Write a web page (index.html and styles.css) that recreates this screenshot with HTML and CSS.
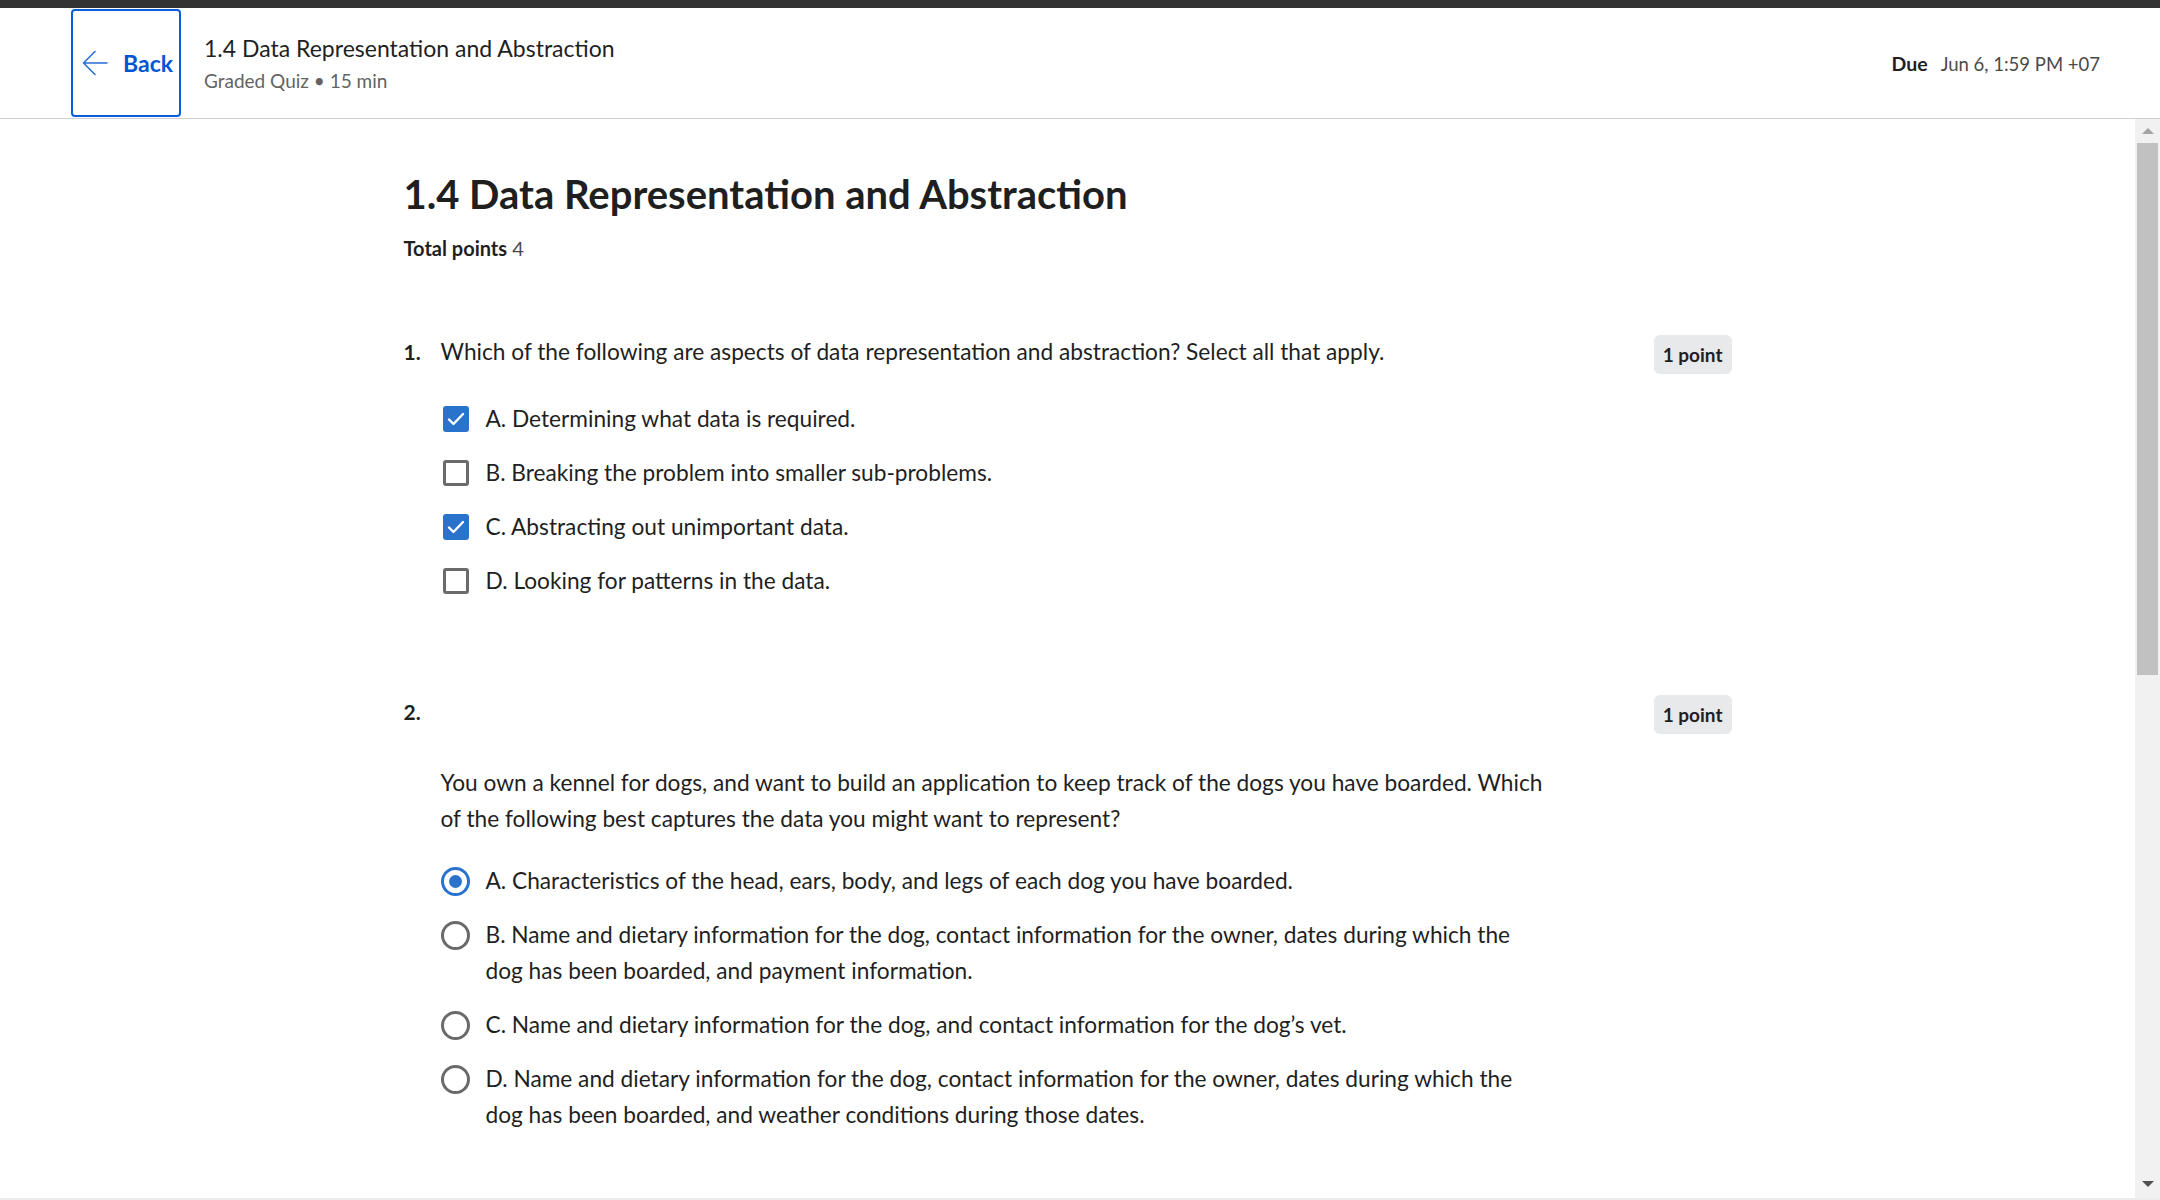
FILE: index.html
```html
<!DOCTYPE html>
<html lang="en">
<head>
<meta charset="utf-8">
<title>1.4 Data Representation and Abstraction</title>
<link rel="stylesheet" href="styles.css">
</head>
<body>
<div class="topbar"></div>
<header class="header">
  <a class="back" href="#">
    <svg class="back-icon" width="26" height="26" viewBox="0 0 26 26" fill="none" stroke="currentColor" stroke-width="1.6" stroke-linecap="round" stroke-linejoin="round"><path d="M25 13H1.5M13 1.5L1.5 13L13 24.5"/></svg>
    <span>Back</span>
  </a>
  <div class="titles">
    <div class="h-title">1.4 Data Representation and Abstraction</div>
    <div class="h-sub">Graded Quiz • 15 min</div>
  </div>
  <div class="due"><span class="due-label">Due</span><span class="due-date">Jun 6, 1:59 PM +07</span></div>
</header>
<div class="main">
  <div class="content">
    <div class="column">
      <h1 class="heading">1.4 Data Representation and Abstraction</h1>
      <div class="total"><span class="total-label">Total points</span> <span class="total-val">4</span></div>

      <section class="question q1">
        <div class="q-head">
          <div class="q-num">1.</div>
          <div class="q-text">Which of the following are aspects of data representation and abstraction? Select all that apply.</div>
          <div class="badge">1 point</div>
        </div>
        <div class="options options-q1">
          <div class="option"><div class="ctrl"><span class="checkbox checked"><svg width="18" height="14" viewBox="0 0 18 14" fill="none" stroke="#fff" stroke-width="2.4" stroke-linecap="round" stroke-linejoin="round"><path d="M2 7.5L6.5 12L16 2"/></svg></span></div><div class="option-text">A. Determining what data is required.</div></div>
          <div class="option"><div class="ctrl"><span class="checkbox"></span></div><div class="option-text">B. Breaking the problem into smaller sub-problems.</div></div>
          <div class="option"><div class="ctrl"><span class="checkbox checked"><svg width="18" height="14" viewBox="0 0 18 14" fill="none" stroke="#fff" stroke-width="2.4" stroke-linecap="round" stroke-linejoin="round"><path d="M2 7.5L6.5 12L16 2"/></svg></span></div><div class="option-text">C. Abstracting out unimportant data.</div></div>
          <div class="option"><div class="ctrl"><span class="checkbox"></span></div><div class="option-text">D. Looking for patterns in the data.</div></div>
        </div>
      </section>

      <section class="question q2">
        <div class="q-head">
          <div class="q-num">2.</div>
          <div class="q-text"></div>
          <div class="badge">1 point</div>
        </div>
        <p class="prompt">You own a kennel for dogs, and want to build an application to keep track of the dogs you have boarded. Which of the following best captures the data you might want to represent?</p>
        <div class="options options-q2">
          <div class="option"><div class="ctrl"><span class="radio checked"></span></div><div class="option-text">A. Characteristics of the head, ears, body, and legs of each dog you have boarded.</div></div>
          <div class="option"><div class="ctrl"><span class="radio"></span></div><div class="option-text">B. Name and dietary information for the dog, contact information for the owner, dates during which the dog has been boarded, and payment information.</div></div>
          <div class="option"><div class="ctrl"><span class="radio"></span></div><div class="option-text">C. Name and dietary information for the dog, and contact information for the dog’s vet.</div></div>
          <div class="option"><div class="ctrl"><span class="radio"></span></div><div class="option-text">D. Name and dietary information for the dog, contact information for the owner, dates during which the dog has been boarded, and weather conditions during those dates.</div></div>
        </div>
      </section>
    </div>
  </div>
  <div class="scrollbar">
    <div class="sb-btn"><span class="tri-up"></span></div>
    <div class="sb-thumb"></div>
    <div class="sb-space"></div>
    <div class="sb-btn"><span class="tri-down"></span></div>
  </div>
</div>
<div class="bottom-strip"></div>
</body>
</html>
```

FILE: styles.css
```css
* { box-sizing: border-box; }
html, body { margin: 0; padding: 0; }
body {
  width: 2160px;
  height: 1200px;
  overflow: hidden;
  background: #fff;
  font-family: Lato, "Liberation Sans", sans-serif;
  color: #1f1f1f;
}
.topbar { height: 8px; background: #333333; }

.header {
  height: 111px;
  border-bottom: 1px solid #cfcfcf;
  display: flex;
  align-items: flex-start;
  padding: 0 60px 0 71px;
}
.back {
  margin-top: 1px;
  width: 110px;
  height: 108px;
  border: 2px solid #0a5ed7;
  border-radius: 4px;
  display: flex;
  align-items: center;
  padding-left: 9px;
  gap: 15px;
  color: #0056d2;
  text-decoration: none;
  font-weight: 700;
  font-size: 23px;
}
.back-icon { flex: none; color: #2a6fd6; }
.titles {
  align-self: center;
  margin-left: 23px;
  display: flex;
  flex-direction: column;
  gap: 5px;
}
.h-title { font-size: 23px; line-height: 30px; color: #1f1f1f; }
.h-sub { font-size: 19px; line-height: 26px; color: #636363; }
.due {
  align-self: center;
  margin-left: auto;
  margin-top: 2px;
  display: flex;
  gap: 13px;
  font-size: 18.5px;
  line-height: 26px;
}
.due-label { font-weight: 700; font-size: 19.5px; color: #1f1f1f; }
.due-date { color: #4a4a4a; }

.main { display: flex; height: 1079px; }
.content { flex: 1; overflow: hidden; }
.column { width: 1328px; margin: 0 auto; padding-top: 51px; }

.heading {
  margin: 0;
  font-size: 40px;
  line-height: 48px;
  font-weight: 700;
  color: #1f1f1f;
}
.total { margin-top: 18px; font-size: 20px; line-height: 24px; }
.total-label { font-weight: 700; }
.total-val { color: #4a4a4a; }

.question { font-size: 22.7px; line-height: 36px; }
.q1 { margin-top: 74px; }
.q2 { margin-top: 95px; }
.q-head { display: flex; align-items: flex-start; }
.q-num { width: 37px; flex: none; font-weight: 700; font-size: 21px; }
.q-text { flex: 1; }
.badge {
  flex: none;
  margin-left: auto;
  margin-top: 1px;
  height: 39px;
  line-height: 39px;
  padding: 0 9px;
  background: #e8e9eb;
  border-radius: 6px;
  font-weight: 700;
  font-size: 19px;
  color: #1f1f1f;
}

.options { display: flex; flex-direction: column; gap: 18px; padding-left: 37px; }
.options-q1 { margin-top: 27px; }
.options-q2 { margin-top: 26px; }
.option { display: flex; align-items: flex-start; gap: 15px; }
.ctrl { flex: none; width: 30px; height: 36px; display: flex; align-items: center; justify-content: center; }
.option-text { max-width: 1059px; }

.checkbox {
  width: 26px;
  height: 26px;
  border: 3px solid #6a6a6a;
  border-radius: 3px;
  display: flex;
  align-items: center;
  justify-content: center;
}
.checkbox.checked { background: #2a73cc; border-color: #2a73cc; }

.radio {
  width: 29px;
  height: 29px;
  border: 3px solid #6a6a6a;
  border-radius: 50%;
  display: flex;
  align-items: center;
  justify-content: center;
}
.radio.checked { border-color: #2a73cc; }
.radio.checked::after {
  content: "";
  width: 13px;
  height: 13px;
  border-radius: 50%;
  background: #2a73cc;
}

.prompt { margin: 31px 0 0; padding-left: 37px; max-width: 1145px; }

.scrollbar {
  flex: none;
  width: 25px;
  background: #f1f1f1;
  display: flex;
  flex-direction: column;
}
.sb-btn { height: 24px; display: flex; align-items: center; justify-content: center; }
.tri-up { width: 0; height: 0; border-left: 6px solid transparent; border-right: 6px solid transparent; border-bottom: 6px solid #a3a3a3; }
.tri-down { width: 0; height: 0; border-left: 6px solid transparent; border-right: 6px solid transparent; border-top: 6px solid #505050; margin-bottom: 4px; }
.sb-thumb { height: 532px; margin: 0 2px; background: #c1c1c1; }
.sb-space { flex: 1; }
.bottom-strip { height: 2px; background: #ececec; }
```
